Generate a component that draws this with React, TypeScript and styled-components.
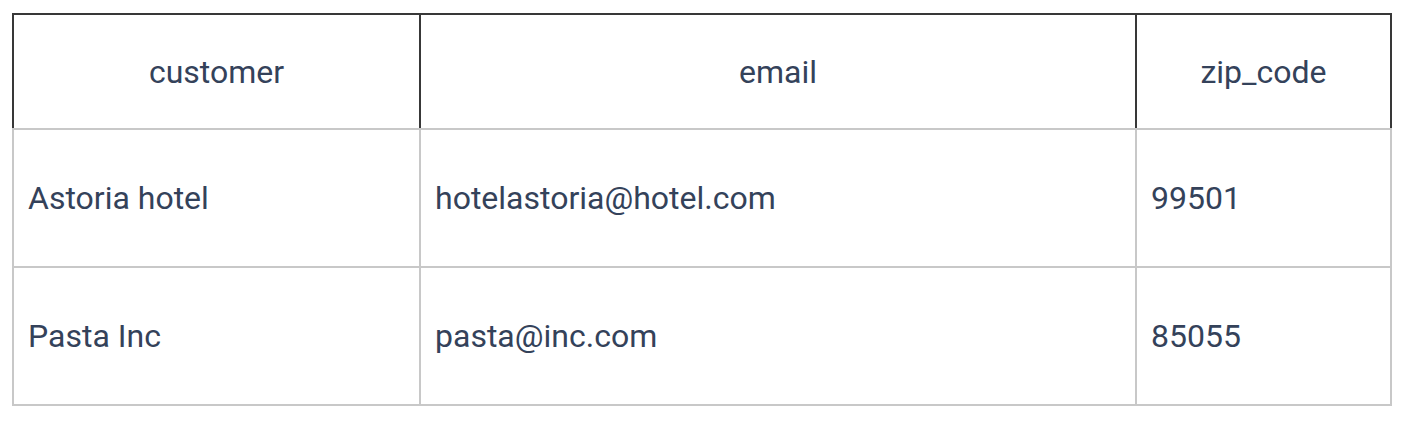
import styled, { createGlobalStyle } from "styled-components";

const rows = [
  { customer: "Astoria hotel", email: "hotelastoria@hotel.com", zip: "99501" },
  { customer: "Pasta Inc", email: "pasta@inc.com", zip: "85055" },
];

export default function App() {
  return (
    <>
      <GlobalStyle />
      <S.Page>
        <S.Table>
          <colgroup>
            <col style={{ width: 409 }} />
            <col style={{ width: 716 }} />
            <col />
          </colgroup>
          <thead>
            <tr>
              <S.Head>customer</S.Head>
              <S.Head>email</S.Head>
              <S.Head>zip_code</S.Head>
            </tr>
          </thead>
          <tbody>
            {rows.map((row) => (
              <tr key={row.email}>
                <S.Cell>{row.customer}</S.Cell>
                <S.Cell>{row.email}</S.Cell>
                <S.Cell>{row.zip}</S.Cell>
              </tr>
            ))}
          </tbody>
        </S.Table>
      </S.Page>
    </>
  );
}

const GlobalStyle = createGlobalStyle`
  body {
    margin: 0;
    background: #ffffff;
    font-family: Roboto, "Liberation Sans", sans-serif;
  }
`;

const S = {
  Page: styled.div`
    padding: 13px 16px 0 12px;
  `,
  Table: styled.table`
    width: 1380px;
    table-layout: fixed;
    border-collapse: separate;
    border-spacing: 0;

    color: #34425a;
    font-size: 32px;
  `,
  Head: styled.th`
    height: 113px;
    padding: 0 16px;

    font-weight: 400;
    text-align: center;
    vertical-align: middle;

    border-top: 2px solid #383838;
    border-right: 2px solid #383838;

    &:first-child {
      border-left: 2px solid #383838;
    }
  `,
  Cell: styled.td`
    height: 136px;
    padding: 0 14px;

    text-align: left;
    vertical-align: middle;

    border-top: 2px solid #c8c8c8;
    border-right: 2px solid #c8c8c8;

    &:first-child {
      border-left: 2px solid #c8c8c8;
    }

    tr:last-child > & {
      border-bottom: 2px solid #c8c8c8;
    }
  `,
};
